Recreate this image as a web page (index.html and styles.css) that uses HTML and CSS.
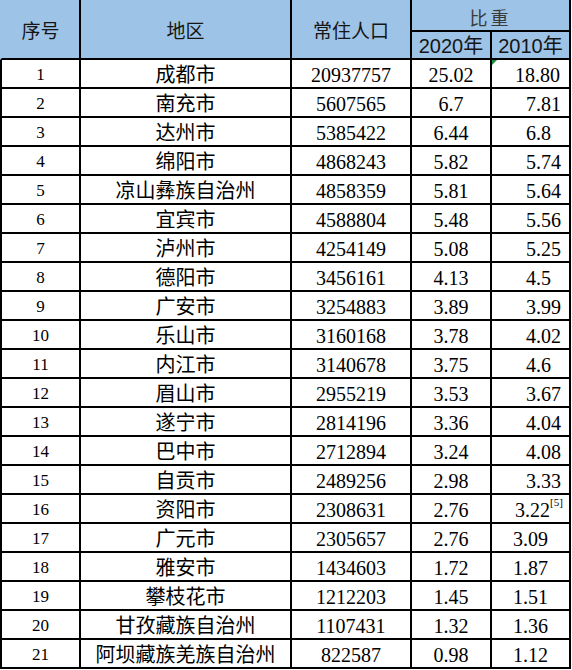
FILE: index.html
```html
<!DOCTYPE html>
<html lang="zh">
<head>
<meta charset="utf-8">
<link rel="stylesheet" href="styles.css">
</head>
<body>
<table class="grid">
  <colgroup>
    <col class="c-idx"><col class="c-area"><col class="c-pop"><col class="c-y20"><col class="c-y10">
  </colgroup>
  <thead>
    <tr class="h1">
      <th rowspan="2" class="first">序号</th>
      <th rowspan="2">地区</th>
      <th rowspan="2">常住人口</th>
      <th colspan="2" class="ratio">比重</th>
    </tr>
    <tr class="h2">
      <th class="year">2020年</th>
      <th class="year">2010年</th>
    </tr>
  </thead>
  <tbody>
    <tr><td class="idx">1</td><td class="area">成都市</td><td class="num">20937757</td><td class="num">25.02</td><td class="num r flag">18.80</td></tr>
    <tr><td class="idx">2</td><td class="area">南充市</td><td class="num">5607565</td><td class="num">6.7</td><td class="num l">7.81</td></tr>
    <tr><td class="idx">3</td><td class="area">达州市</td><td class="num">5385422</td><td class="num">6.44</td><td class="num l">6.8</td></tr>
    <tr><td class="idx">4</td><td class="area">绵阳市</td><td class="num">4868243</td><td class="num">5.82</td><td class="num l">5.74</td></tr>
    <tr><td class="idx">5</td><td class="area">凉山彝族自治州</td><td class="num">4858359</td><td class="num">5.81</td><td class="num l">5.64</td></tr>
    <tr><td class="idx">6</td><td class="area">宜宾市</td><td class="num">4588804</td><td class="num">5.48</td><td class="num l">5.56</td></tr>
    <tr><td class="idx">7</td><td class="area">泸州市</td><td class="num">4254149</td><td class="num">5.08</td><td class="num l">5.25</td></tr>
    <tr><td class="idx">8</td><td class="area">德阳市</td><td class="num">3456161</td><td class="num">4.13</td><td class="num l">4.5</td></tr>
    <tr><td class="idx">9</td><td class="area">广安市</td><td class="num">3254883</td><td class="num">3.89</td><td class="num l">3.99</td></tr>
    <tr><td class="idx">10</td><td class="area">乐山市</td><td class="num">3160168</td><td class="num">3.78</td><td class="num l">4.02</td></tr>
    <tr><td class="idx">11</td><td class="area">内江市</td><td class="num">3140678</td><td class="num">3.75</td><td class="num l">4.6</td></tr>
    <tr><td class="idx">12</td><td class="area">眉山市</td><td class="num">2955219</td><td class="num">3.53</td><td class="num l">3.67</td></tr>
    <tr><td class="idx">13</td><td class="area">遂宁市</td><td class="num">2814196</td><td class="num">3.36</td><td class="num l">4.04</td></tr>
    <tr><td class="idx">14</td><td class="area">巴中市</td><td class="num">2712894</td><td class="num">3.24</td><td class="num l">4.08</td></tr>
    <tr><td class="idx">15</td><td class="area">自贡市</td><td class="num">2489256</td><td class="num">2.98</td><td class="num l">3.33</td></tr>
    <tr><td class="idx">16</td><td class="area">资阳市</td><td class="num">2308631</td><td class="num">2.76</td><td class="num sup-cell">3.22<sup class="ref">[5]</sup></td></tr>
    <tr><td class="idx">17</td><td class="area">广元市</td><td class="num">2305657</td><td class="num">2.76</td><td class="num">3.09</td></tr>
    <tr><td class="idx">18</td><td class="area">雅安市</td><td class="num">1434603</td><td class="num">1.72</td><td class="num">1.87</td></tr>
    <tr><td class="idx">19</td><td class="area">攀枝花市</td><td class="num">1212203</td><td class="num">1.45</td><td class="num">1.51</td></tr>
    <tr><td class="idx">20</td><td class="area">甘孜藏族自治州</td><td class="num">1107431</td><td class="num">1.32</td><td class="num">1.36</td></tr>
    <tr><td class="idx">21</td><td class="area">阿坝藏族羌族自治州</td><td class="num">822587</td><td class="num">0.98</td><td class="num">1.12</td></tr>
  </tbody>
</table>
</body>
</html>
```
FILE: styles.css
```css
html, body {
  margin: 0;
  padding: 0;
  background: #fff;
}

.grid {
  border-collapse: separate;
  border-spacing: 0;
  table-layout: fixed;
  width: 571px;
  margin: 0;
}

.c-idx { width: 81px; }
.c-area { width: 211px; }
.c-pop { width: 120px; }
.c-y20 { width: 80px; }
.c-y10 { width: 79px; }

.grid th,
.grid td {
  border-right: 2px solid #000;
  border-bottom: 2px solid #000;
  padding: 0;
  text-align: center;
  vertical-align: middle;
  white-space: nowrap;
  box-sizing: border-box;
}

.grid th.first,
.grid td.idx {
  border-left: 2px solid #000;
}

.grid th.first {
  border-left-color: #9dc3e6;
}

.grid th {
  background: #9dc3e6;
  font-family: "Noto Sans CJK SC", "Liberation Sans", sans-serif;
  font-weight: normal;
  font-size: 19px;
  color: #151515;
  line-height: 1;
}

.h1 { height: 32px; }
.h2 { height: 28px; }

.grid th.ratio {
  color: #3a3a3a;
  font-size: 18px;
  letter-spacing: 3px;
  padding-top: 3px;
}

.grid th.year {
  font-family: "Liberation Sans", "Noto Sans CJK SC", sans-serif;
  font-size: 20px;
  padding-top: 1px;
}

.grid tbody tr {
  height: 29px;
}

.grid td {
  font-family: "Liberation Serif", "Noto Sans CJK SC", serif;
  font-size: 20px;
  color: #000;
  line-height: 1;
  padding-top: 2px;
}

.grid td.idx {
  font-size: 17px;
}

.grid td.area {
  font-family: "Noto Sans CJK SC", "Liberation Sans", sans-serif;
  font-size: 20px;
  padding-top: 0;
}

.grid td.r {
  text-align: right;
  padding-right: 9px;
}

.grid td.l {
  text-align: left;
  padding-left: 34px;
}

.grid td.sup-cell {
  text-align: left;
  padding-left: 23px;
}

.grid td.flag {
  position: relative;
}

.grid td.flag::before {
  content: "";
  position: absolute;
  left: 0;
  top: 0;
  border-top: 5px solid #1e8e3e;
  border-right: 5px solid transparent;
}

.ref {
  font-size: 11px;
  vertical-align: top;
  position: relative;
  top: -3px;
  line-height: 1;
}
```
